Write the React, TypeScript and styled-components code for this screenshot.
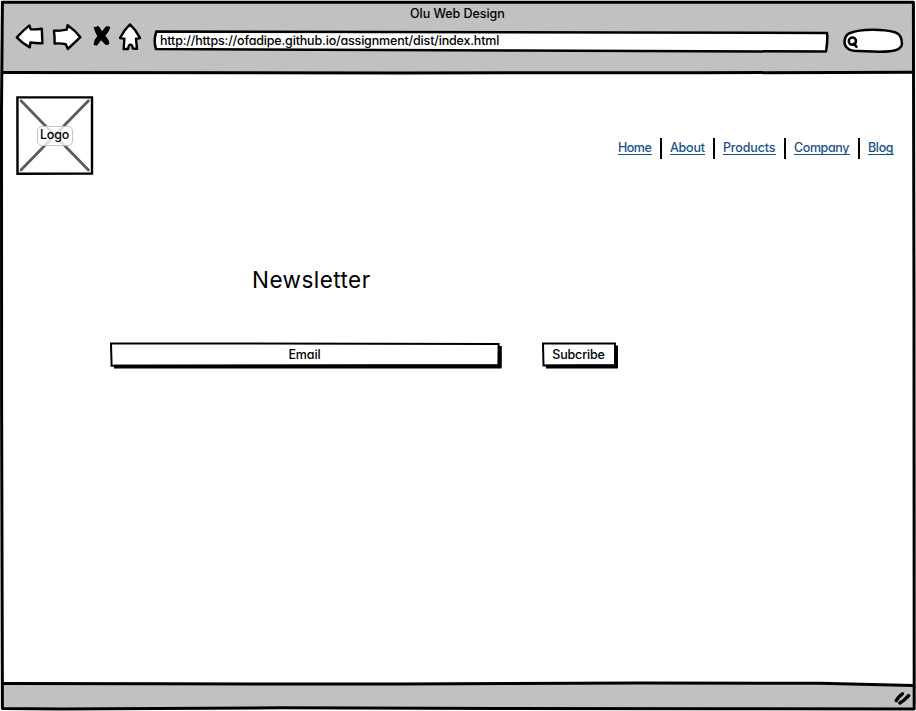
import React from "react";
import styled, { createGlobalStyle } from "styled-components";

const GlobalStyle = createGlobalStyle`
  * { box-sizing: border-box; }
  body {
    margin: 0;
    background: #fff;
    color: #000;
    font-family: Inter, Lato, sans-serif;
    font-size: 12.5px;
    font-weight: 500;
    line-height: 16px;
    font-feature-settings: "cv11" 1;
    overflow: hidden;
  }
`;

const Window = styled.div`
  position: relative;
  display: flex;
  flex-direction: column;
  width: 916px;
  height: 711px;
  padding: 2px 2px 2px 2px;
`;

const Outline = styled.svg`
  position: absolute;
  inset: 0;
  width: 100%;
  height: 100%;
  overflow: visible;
  pointer-events: none;
  fill: none;
  stroke: #000;
  stroke-linejoin: round;
  stroke-linecap: round;
`;

const TitleBar = styled.header`
  height: 70px;
  background: #c1c1c1;
`;

const Title = styled.div<{ $spacing: number }>`
  height: 22px;
  padding: 4px 0 0 408px;
  letter-spacing: ${(p) => p.$spacing}px;
`;

const Toolbar = styled.div`
  display: flex;
  height: 32px;
`;

const NavIcons = styled.svg`
  flex: none;
  width: 150px;
  height: 32px;
  overflow: visible;
  stroke: #000;
  stroke-width: 2.4;
  stroke-linejoin: round;
  stroke-linecap: round;
`;

const AddressBar = styled.div`
  position: relative;
  width: 676px;
  height: 24px;
  margin-top: 5px;
`;

const Address = styled.div`
  position: relative;
  padding: 4px 0 0 8px;
  letter-spacing: -0.17px;
`;

const SearchField = styled.div`
  position: relative;
  width: 62px;
  height: 26px;
  margin: 4px 0 0 14px;
`;

const Page = styled.main`
  flex: 1;
`;

const SiteHeader = styled.div`
  display: flex;
  justify-content: space-between;
  padding: 24px 20px 0 14px;
`;

const LogoBox = styled.div`
  position: relative;
  display: flex;
  align-items: center;
  justify-content: center;
  width: 77px;
  height: 79px;
`;

const LogoLabel = styled.span`
  position: relative;
  width: 36px;
  height: 20px;
  border: 1px solid #c6c6c6;
  border-radius: 5px;
  background: rgba(255, 255, 255, 0.8);
  line-height: 16px;
  text-align: center;
  letter-spacing: -0.25px;
`;

const Nav = styled.nav`
  display: flex;
  align-items: flex-start;
  padding-top: 42px;
`;

const NavLink = styled.a<{ $width: number; $spacing: number }>`
  width: ${(p) => p.$width}px;
  height: 17px;
  border-bottom: 1px solid #18508c;
  color: #18508c;
  line-height: 19px;
  white-space: nowrap;
  letter-spacing: ${(p) => p.$spacing}px;
`;

const Divider = styled.span`
  width: 2px;
  height: 21px;
  margin: 0 8px;
  background: #000;
`;

const Heading = styled.h1`
  margin: 90px 0 0 250px;
  font-size: 22.5px;
  font-weight: 400;
  line-height: 30px;
  letter-spacing: 0.45px;
`;

const Form = styled.div`
  display: flex;
  gap: 40px;
  margin: 47px 0 0 108px;
`;

const Field = styled.div<{ $width: number; $spacing: number }>`
  position: relative;
  width: ${(p) => p.$width}px;
  height: 27px;
  padding: 5px 3px 0 0;
  text-align: center;
  letter-spacing: ${(p) => p.$spacing}px;
`;

const StatusBar = styled.footer`
  display: flex;
  justify-content: flex-end;
  height: 25px;
  padding: 4px 1px 0 0;
  background: #c1c1c1;
`;

const Grip = styled.svg`
  width: 20px;
  height: 18px;
  fill: none;
  stroke: #000;
  stroke-width: 3.4;
  stroke-linecap: round;
`;

const links = [
  { label: "Home", width: 34, spacing: -0.5 },
  { label: "About", width: 35, spacing: -0.25 },
  { label: "Products", width: 53, spacing: -0.15 },
  { label: "Company", width: 56, spacing: -0.4 },
  { label: "Blog", width: 26, spacing: -0.35 },
];

export default function App() {
  return (
    <>
      <GlobalStyle />
      <Window>
        <TitleBar>
          <Title $spacing={-0.05}>Olu Web Design</Title>
          <Toolbar>
            <NavIcons viewBox="2 24 150 32" fill="#fff">
              <path d="M16.8 37.4 Q23 30.6 29.4 25.4 L30.6 29.2 Q36 29.6 41.8 28.8 L42.4 43.2 Q36 43.4 30.4 42.4 L29.8 47.4 Q22 43 16.8 37.4 Z" />
              <path d="M54 30.8 Q60 30.8 66.8 29.6 L67.6 25.2 Q75 30.2 80.4 37.2 L67.8 49 L65.8 44.2 Q60 43 54.6 43.6 Q54.8 37 54 30.8 Z" />
              <path
                d="M94.4 27.6 L98.6 26.6 L102 32 L106 26.8 L109.8 27 Q109.2 31 104.8 35.8 Q109 40 109 44 L105.8 44.6 L101 39.6 L96.8 45.2 L94 44.6 Q94.2 40 97.8 36 Q95 32 94.4 27.6 Z"
                fill="#000"
                strokeWidth="1"
              />
              <path d="M130 24.4 Q136 30 140 38 L136 38.8 L137 48.8 L132.8 48.6 Q132.4 44.6 130.6 44.6 Q128.6 44.6 128 49 L123.6 49 L124.4 38.6 L120 38 Q124 30 130 24.4 Z" />
            </NavIcons>
            <AddressBar>
              <Outline viewBox="152 29 676 24">
                <path fill="#fff" strokeWidth="2.5" d="M156.3 31.5 C350 31.4 600 32.8 827 33 C828 39 827 45 826 51.6 C620 51.2 350 49.6 156 49 C154 43 154.5 37 156.3 31.5 Z" />
              </Outline>
              <Address>http://https://ofadipe.github.io/assignment/dist/index.html</Address>
            </AddressBar>
            <SearchField>
              <Outline viewBox="842 28 62 26">
                <path fill="#fff" strokeWidth="2.5" d="M850 33 C861 28.8 882 28.8 895 32.2 C900.6 34 901.6 38 902 44 C901.5 49 897 50.6 890 51.2 C878 52.6 866 51 854 50.8 C847 50 844 45.5 844.6 41 C845 36.5 847 34 850 33 Z" />
                <circle cx="852.4" cy="41.2" r="3.6" strokeWidth="2.5" />
                <path d="M854 43.6 L856.4 46.8" strokeWidth="2.6" />
              </Outline>
            </SearchField>
          </Toolbar>
        </TitleBar>
        <Page>
          <SiteHeader>
            <LogoBox>
              <Outline viewBox="16 96 77 79">
                <path d="M21 100.8 L88.4 170 M88.4 100.8 L21 170" stroke="#5c5c5c" strokeWidth="2.8" />
                <path d="M17.4 97.4 L92 97.4 L92 173.6 L17.5 173.8 Z" strokeWidth="2.4" strokeLinejoin="miter" />
              </Outline>
              <LogoLabel>Logo</LogoLabel>
            </LogoBox>
            <Nav>
              {links.map((link, i) => (
                <React.Fragment key={link.label}>
                  <NavLink $width={link.width} $spacing={link.spacing}>{link.label}</NavLink>
                  {i < links.length - 1 && <Divider />}
                </React.Fragment>
              ))}
            </Nav>
          </SiteHeader>
          <Heading>Newsletter</Heading>
          <Form>
            <Field $width={392} $spacing={-0.1}>
              <Outline viewBox="110 342 392 27">
                <path d="M114 366.6 L501.4 366.6 M500 346 L500 367.4" strokeWidth="3.6" strokeLinecap="butt" />
                <path d="M111 343.4 L498.6 344 L498.4 365 L111.6 365.8 Z" strokeWidth="2" strokeLinejoin="miter" />
              </Outline>
              Email
            </Field>
            <Field $width={76} $spacing={-0.15}>
              <Outline viewBox="542 342 76 27">
                <path d="M546 366.6 L617.8 366.6 M616.2 345.4 L616.2 368" strokeWidth="3.6" strokeLinecap="butt" />
                <path d="M543 343.6 L615 343.6 L615 365 L543.5 365.4 Z" strokeWidth="2" strokeLinejoin="miter" />
              </Outline>
              Subcribe
            </Field>
          </Form>
        </Page>
        <StatusBar>
          <Grip viewBox="893 688 20 18">
            <path d="M896.2 700.6 C898 697.6 900 695.4 902.4 693.8 M899.8 703 C903 701.2 906 698.6 908.6 695.6" />
          </Grip>
        </StatusBar>
        <Outline viewBox="0 0 916 711" strokeWidth="3">
          <path d="M2.4 2.2 L913.4 2.2 L914 300 L914.2 709 L720 708.8 L500 708.6 L280 707.8 L60 709 L2.4 708.4 L1.6 400 L1.5 110 Z" />
          <path d="M3 72.4 L400 72.9 L700 72.8 L913 72.2" />
          <path d="M3 683.4 L160 683.8 L400 684 L640 683 L820 683.2 L913 685.6" />
        </Outline>
      </Window>
    </>
  );
}
